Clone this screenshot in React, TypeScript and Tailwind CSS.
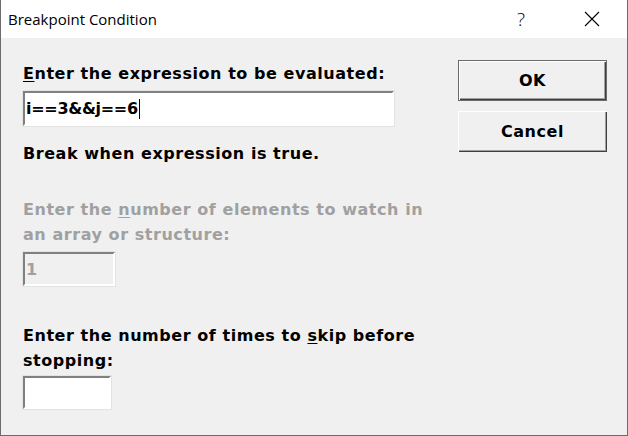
export default function App() {
  const label = "font-['DejaVu_Sans',sans-serif] font-bold text-[16px] leading-[25px] tracking-[0.55px]";
  const field = "font-['DejaVu_Sans',sans-serif] font-bold text-[16px] leading-[25px] tracking-[-0.3px]";
  return (
    <div className="w-[628px] h-[436px] flex flex-col bg-[#f0f0f0] border-l border-b border-r border-[#6b6b6b] overflow-hidden">
      {/* title bar */}
      <div className="h-[38px] bg-white flex items-center shrink-0 font-['Open_Sans',sans-serif] text-[15px] text-black">
        <span className="pl-[7px]">Breakpoint Condition</span>
        <span className="ml-auto w-[24px] text-center mr-[51px] text-[19px] font-light">?</span>
        <svg width="16" height="16" viewBox="0 0 16 16" className="mr-[27px]">
          <path d="M1 1 L15 15 M15 1 L1 15" stroke="#000" strokeWidth="1.1" />
        </svg>
      </div>

      <div className="flex flex-1">
        {/* left column */}
        <div className="flex flex-col pl-[22px] w-[440px]">
          <div className={`${label} mt-[23px] text-black`}>
            <span className="underline underline-offset-2">E</span>nter the expression to be evaluated:
          </div>
          <div className="mt-[5px] w-[371px] h-[35px] bg-white border-2 border-t-[#808080] border-l-[#808080] border-b-[#fff] border-r-[#fff] shadow-[0_0_0_1px_#e3e3e3] flex items-center pl-[1px]">
            <span className={`${field} text-black`}>i==3&amp;&amp;j==6</span>
            <span className="w-px h-[20px] bg-black ml-[1px]" />
          </div>
          <div className={`${label} mt-[15px] text-black`}>Break when expression is true.</div>

          <div className={`${label} mt-[31px] text-[#a0a0a0]`}>
            Enter the <span className="underline underline-offset-2">n</span>umber of elements to watch in
            <br />
            an array or structure:
          </div>
          <div className="mt-[5px] w-[92px] h-[34px] bg-[#f0f0f0] border-2 border-t-[#808080] border-l-[#808080] border-b-[#fff] border-r-[#fff] shadow-[0_0_0_1px_#e3e3e3] flex items-center pl-[1px]">
            <span className={`${field} text-[#a0a0a0]`}>1</span>
          </div>

          <div className={`${label} mt-[37px] text-black`}>
            Enter the number of times to <span className="underline underline-offset-2">s</span>kip before
            <br />
            stopping:
          </div>
          <div className="mt-[3px] w-[88px] h-[33px] bg-white border-2 border-t-[#808080] border-l-[#808080] border-b-[#fff] border-r-[#fff] shadow-[0_0_0_1px_#e3e3e3]" />
        </div>

        {/* buttons */}
        <div className="flex flex-col pl-[17px] pt-[22px] gap-[10px]">
          <button className={`${label} w-[149px] h-[41px] bg-[#f0f0f0] text-black border border-[#6b6b6b] shadow-[inset_1px_1px_0_#fff,inset_-1px_-1px_0_#404040,inset_-2px_-2px_0_#a0a0a0]`}>
            OK
          </button>
          <button className={`${label} w-[149px] h-[41px] bg-[#f0f0f0] text-black shadow-[inset_1px_1px_0_#fff,inset_-1px_-1px_0_#404040,inset_-2px_-2px_0_#a0a0a0]`}>
            Cancel
          </button>
        </div>
      </div>
    </div>
  );
}
